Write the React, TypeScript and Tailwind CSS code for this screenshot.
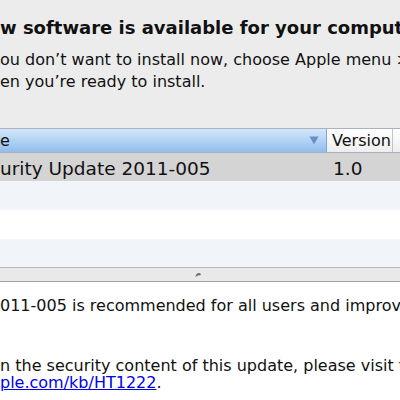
import React from "react";

export default function App() {
  const rows = [
    { bg: "bg-[#d4d4d4]", h: "h-[28px]", name: "urity Update 2011-005", ver: "1.0" },
    { bg: "bg-[#f1f5fa]", h: "h-[29px]", name: "", ver: "" },
    { bg: "bg-white", h: "h-[29px]", name: "", ver: "" },
    { bg: "bg-[#f1f5fa]", h: "h-[28px]", name: "", ver: "" },
  ];
  return (
    <div
      className="w-[400px] h-[400px] overflow-hidden bg-[#ececec] text-[#111] flex flex-col"
      style={{ fontFamily: '"DejaVu Sans", "Liberation Sans", sans-serif' }}
    >
      <div className="mt-[17px] whitespace-nowrap overflow-hidden text-[18px] leading-[22px] font-bold">
        w software is available for your computer
      </div>
      <div className="mt-[10px] whitespace-nowrap overflow-hidden text-[16px] leading-[21.5px]">
        <div>ou don’t want to install now, choose Apple menu &gt; Software Update</div>
        <div>en you’re ready to install.</div>
      </div>

      <div className="mt-[36px] flex flex-col">
        {/* header */}
        <div className="flex h-[25px] border-t border-b border-[#a9b3c0]">
          <div className="w-[327px] flex items-center justify-between border-r border-[#7ea6d6] bg-gradient-to-b from-[#d4e7fa] to-[#90beee] text-[16px]">
            <span>e</span>
            <svg width="10" height="9" viewBox="0 0 10 9" className="mr-[7px]">
              <polygon points="0.5,0.5 9.5,0.5 5,8.5" fill="#6b8fc2" />
            </svg>
          </div>
          <div className="w-[66px] flex items-center pl-[5px] border-r border-[#c3c3c3] bg-gradient-to-b from-white to-[#eeeeee] text-[16px] whitespace-nowrap overflow-hidden">
            Version
          </div>
          <div className="flex-1 bg-gradient-to-b from-white to-[#eeeeee]" />
        </div>
        {rows.map((r, i) => (
          <div key={i} className={`flex items-center ${r.h} ${r.bg} text-[18.5px] pt-[3px]`}>
            <div className="w-[328px] whitespace-nowrap">{r.name}</div>
            <div className="pl-[5px]">{r.ver}</div>
          </div>
        ))}
        {/* splitter */}
        <div className="h-[15px] border-t border-b border-t-[#b8b8b8] border-b-[#a0a0a0] bg-[#e9e9e9] flex items-center justify-center">
          <svg width="8" height="6" viewBox="0 0 8 6" className="ml-[-4px]">
            <path d="M1 5 L3 1.5 L6 1 L7 3 L4 3.5 Z" fill="#6a6a6a" />
          </svg>
        </div>
      </div>

      <div className="flex-1 bg-white text-[16px] leading-[17.5px] whitespace-nowrap overflow-hidden pt-[15px]">
        <div>011-005 is recommended for all users and improves the security of Mac OS X.</div>
        <div className="mt-[42px]">n the security content of this update, please visit this website:</div>
        <div>
          <span className="text-[#0000ee] underline">ple.com/kb/HT1222</span>.
        </div>
      </div>
    </div>
  );
}
